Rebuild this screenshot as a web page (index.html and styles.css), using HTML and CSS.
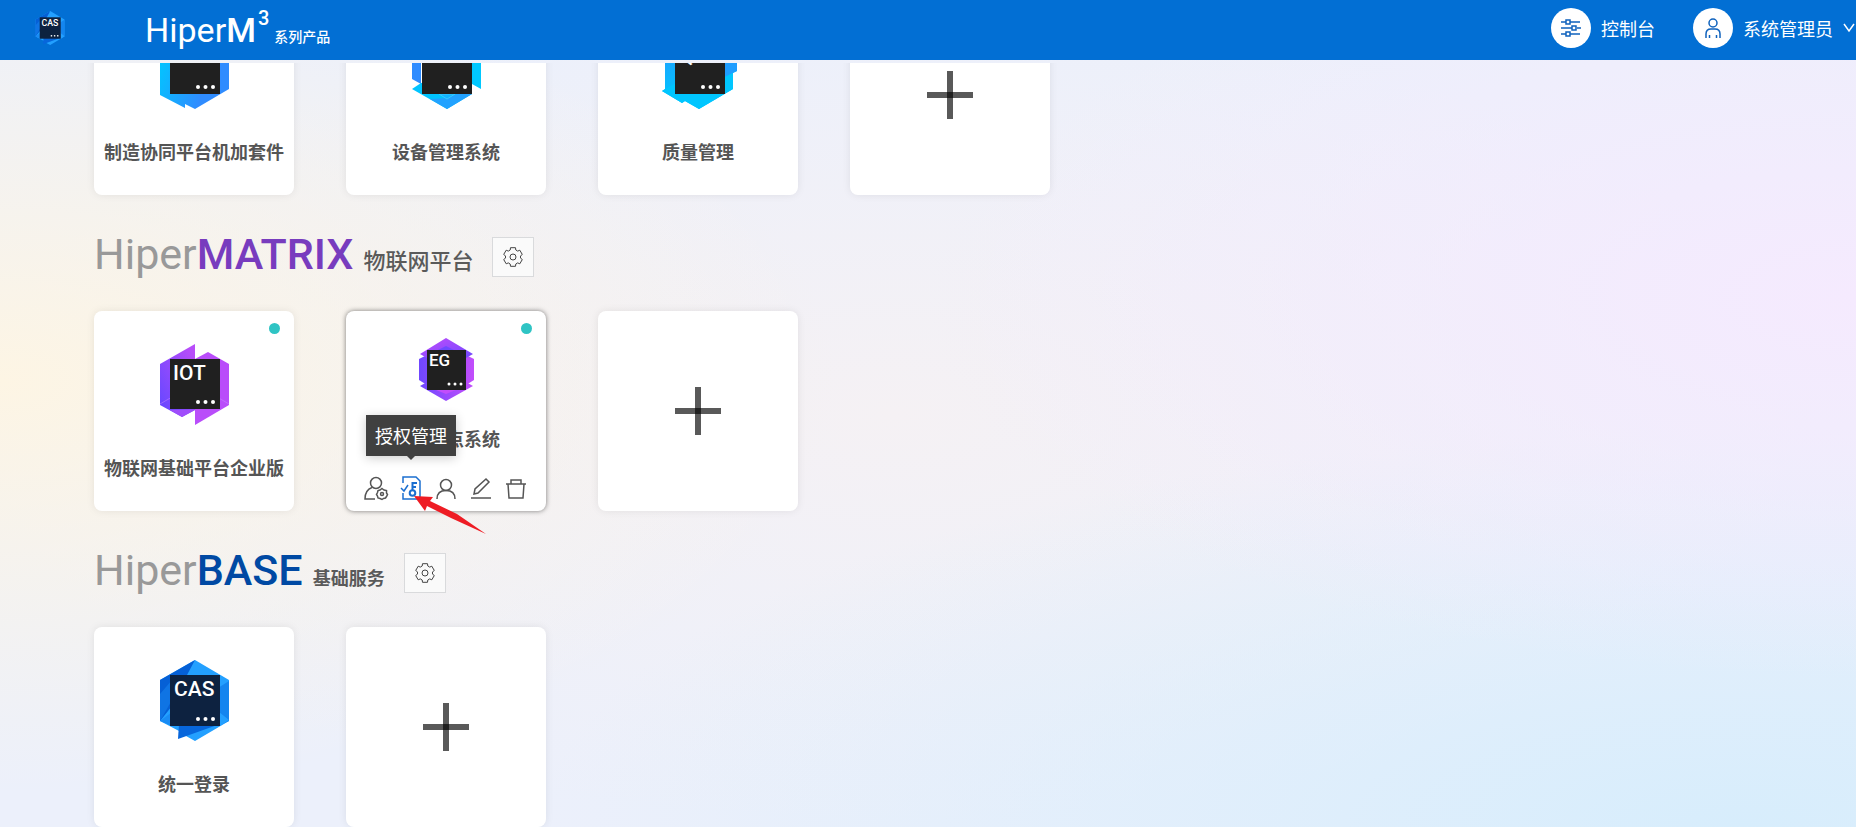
FILE: index.html
```html
<!DOCTYPE html>
<html lang="zh-CN">
<head>
    <meta charset="UTF-8">
    <meta name="viewport" content="width=device-width, initial-scale=1.0">
    <title>HiperM³ 系列产品</title>
    <link rel="stylesheet" href="styles.css">
</head>
<body>
    <svg class="defs" width="0" height="0" aria-hidden="true">
        <defs>
            <linearGradient id="cyanBlue" x1="0" y1="0.3" x2="1" y2="0.7">
                <stop offset="0" stop-color="#00c8ff"/>
                <stop offset="0.7" stop-color="#2f8cff"/>
            </linearGradient>
            <linearGradient id="blueCyan" x1="0" y1="0" x2="0.3" y2="1">
                <stop offset="0" stop-color="#2f8cff"/>
                <stop offset="0.8" stop-color="#00c4ff"/>
            </linearGradient>
            <linearGradient id="violet" x1="0" y1="0.8" x2="0.8" y2="0">
                <stop offset="0" stop-color="#6a48ff"/>
                <stop offset="1" stop-color="#b84dfa"/>
            </linearGradient>
            <linearGradient id="violetSide" x1="0" y1="0" x2="1" y2="0">
                <stop offset="0" stop-color="#6f48ff"/>
                <stop offset="1" stop-color="#c24dfb"/>
            </linearGradient>
            <linearGradient id="violetDown" x1="0" y1="0" x2="1" y2="1">
                <stop offset="0" stop-color="#c24dfb"/>
                <stop offset="1" stop-color="#6f48ff"/>
            </linearGradient>
        </defs>
        <symbol id="cas" viewBox="0 0 69 81">
            <path d="M35 0L69 20V61L35 81L26 76L19 71L0 61V20Z" fill="#23a0ff"/>
            <path d="M35 0L0 20V61L12 46L27 15Z" fill="#0560d6"/>
            <path d="M0 34V61L12 40V20Z" fill="#0f74e4"/>
            <path d="M0 61L12 52V66Z" fill="#1a8cf4"/>
            <path d="M69 21L58 28V66L69 61Z" fill="#1485ef"/>
            <path d="M59 52L69 60L60 66Z" fill="#23a0ff"/>
            <path d="M19 64L18 79L60 64Z" fill="#0766db"/>
            <path d="M10 15H60V66H10Z" fill="#0d2240"/>
            <text x="14" y="36" class="logo-text">CAS</text>
            <g fill="#fff"><circle cx="38" cy="59" r="2"/><circle cx="45.500" cy="59" r="2"/><circle cx="53" cy="59" r="2"/></g>
        </symbol>
        <symbol id="gear" viewBox="-11 -11 22 22">
            <path d="M-2.800 -7L-2.500 -9.300H2.500L2.800 -7L4.700 -5.900L6.800 -6.800L9.300 -2.500L7.500 -1.100V1.100L9.300 2.500L6.800 6.800L4.700 5.900L2.800 7L2.500 9.300H-2.500L-2.800 7L-4.700 5.900L-6.800 6.800L-9.300 2.500L-7.500 1.100V-1.100L-9.300 -2.500L-6.800 -6.800L-4.700 -5.900Z"/>
            <circle r="3"/>
        </symbol>
        <symbol id="plus" viewBox="0 0 46 48">
            <path d="M0 21H46V27H0Z"/>
            <path d="M20 0H26V48H20Z"/>
        </symbol>
    </svg>

    <header class="topbar">
        <svg class="brand-logo"><use href="#cas"/></svg>
        <h1 class="brand">Hiper<b>M</b><sup>3</sup><small>系列产品</small></h1>
        <nav class="topbar-nav">
            <a href="#" class="nav-item">
                <span class="nav-icon">
                    <svg width="20" height="20" viewBox="0 0 20 20">
                        <path d="M0 4H5M9 4H19M0 10H11M16 10H20M0 16H5M9 16H19M5 2H9V6H5ZM11 8H15V12H11ZM5 14H9V18H5Z"/>
                    </svg>
                </span>
                控制台
            </a>
            <button type="button" class="nav-item">
                <span class="nav-icon">
                    <svg width="18" height="20" viewBox="0 0 18 20">
                        <circle cx="9" cy="5" r="4"/>
                        <path d="M2 20V16Q2 11 7 11H11Q16 11 16 16V20M5.500 20V17M12.500 20V17"/>
                    </svg>
                </span>
                系统管理员
                <svg class="chevron" width="12" height="10" viewBox="0 0 12 10"><path d="M1 1L6 8L11 1"/></svg>
            </button>
        </nav>
    </header>

    <main>
        <section>
            <div class="cards">
                <a href="#" class="card">
                    <svg class="app-icon" viewBox="0 0 69 81">
                        <path d="M0 16L25 2V10L35 0L69 20V61L35 81L25 76V80L0 67Z" fill="url(#cyanBlue)"/>
                        <path d="M10 16H60V66H10Z" fill="#202020"/>
                        <text x="14" y="35" class="logo-text">MW</text>
                        <g fill="#fff"><circle cx="38" cy="59" r="2"/><circle cx="45.500" cy="59" r="2"/><circle cx="53" cy="59" r="2"/></g>
                    </svg>
                    <span class="card-name">制造协同平台机加套件</span>
                </a>
                <a href="#" class="card">
                    <svg class="app-icon" viewBox="0 0 69 81">
                        <path d="M35 0L0 20V51L9 56V20Z" fill="#2f8cff"/>
                        <path d="M35 0L69 20V61L60 56V20Z" fill="#00c8ff"/>
                        <path d="M9 55L0 61L35 81L60 66V50Z" fill="#00c4ff"/>
                        <path d="M60 60V66L35 81L18 71L35 70Z" fill="#22a2ff"/>
                        <path d="M27 66L35 71L43 66Z" fill="#12b4ff" stroke="#38c8ff"/>
                        <path d="M10 16H60V66H10Z" fill="#202020"/>
                        <text x="14" y="35" class="logo-text">EAM</text>
                        <g fill="#fff"><circle cx="38" cy="59" r="2"/><circle cx="45.500" cy="59" r="2"/><circle cx="53" cy="59" r="2"/></g>
                    </svg>
                    <span class="card-name">设备管理系统</span>
                </a>
                <a href="#" class="card">
                    <svg class="app-icon" viewBox="0 0 69 81">
                        <path d="M35 0L1 20V61L-2 63L18 75L21 73L35 81L69 61V45L73 43V22Z" fill="url(#blueCyan)"/>
                        <path d="M58 50L73 43V20L58 20Z" fill="#1f9dff"/>
                        <path d="M-2 63L10 56L60 50L69 45V61L35 81L21 73L18 75Z" fill="#00c6ff"/>
                        <path d="M11 16H61V66H11Z" fill="#202020"/>
                        <text x="15" y="35" class="logo-text">QMS</text>
                        <g fill="#fff"><circle cx="39" cy="59" r="2"/><circle cx="46.500" cy="59" r="2"/><circle cx="54" cy="59" r="2"/></g>
                    </svg>
                    <span class="card-name">质量管理</span>
                </a>
                <button type="button" class="card card-add" aria-label="添加应用"><svg class="plus"><use href="#plus"/></svg></button>
            </div>
        </section>

        <section>
            <div class="section-head">
                <h2 class="wordmark matrix">Hiper<b>MATRIX</b><small>物联网平台</small></h2>
                <button type="button" class="setting" aria-label="设置"><svg><use href="#gear"/></svg></button>
            </div>
            <div class="cards">
                <a href="#" class="card">
                    <i class="status"></i>
                    <svg class="app-icon" viewBox="0 0 69 81">
                        <path d="M0 20L35 0V66L22 73L0 61Z" fill="url(#violet)"/>
                        <path d="M35 15L48 8L69 20V61L35 81Z" fill="#b94dfa"/>
                        <path d="M10 66H35L22 73Z" fill="#a04dfb"/>
                        <path d="M0 60L12 53M69 60L57 53" stroke="#c98bff" stroke-width="0.500"/>
                        <path d="M10 15H60V65H10Z" fill="#202020"/>
                        <text x="13" y="36" class="logo-text">IOT</text>
                        <g fill="#fff"><circle cx="38" cy="58" r="2"/><circle cx="45.500" cy="58" r="2"/><circle cx="53" cy="58" r="2"/></g>
                    </svg>
                    <span class="card-name">物联网基础平台企业版</span>
                </a>
                <div class="card card-active">
                    <i class="status"></i>
                    <svg class="app-icon" viewBox="0 0 55 63">
                        <path d="M0 21L8 17H47L55 21V42L47 47H8L0 42Z" fill="url(#violetSide)"/>
                        <path d="M27 0L54 16L47 20H8L1 16Z" fill="url(#violetDown)"/>
                        <path d="M8 44H47L54 48L27 63L1 48Z" fill="url(#violetSide)"/>
                        <path d="M17 52H37L27 56Z" fill="#c24dfb"/>
                        <path d="M19 12L27 8L35 12Z" fill="#6f48ff"/>
                        <path d="M8 12H47V52H8Z" fill="#202020"/>
                        <text x="10" y="28" class="logo-text small">EG</text>
                        <g fill="#fff"><circle cx="30" cy="46" r="1.500"/><circle cx="36" cy="46" r="1.500"/><circle cx="42" cy="46" r="1.500"/></g>
                    </svg>
                    <span class="card-name">边缘节点系统</span>
                    <div class="tools">
                        <button type="button" class="tool" aria-label="用户配置">
                            <svg viewBox="0 0 24 24">
                                <circle cx="12" cy="7" r="5.500"/>
                                <path d="M8 11.500Q1 14 1 23H11"/>
                                <path d="M18 12.500L20 14L22.500 14.500V17L23.500 18.500L22.500 20.500L21.500 22L19.500 22.500L18 23.500L16 22.500L14 22L13.500 20L12.500 18.500L13.500 16.500L14 14.500L16 14Z"/>
                                <circle cx="18" cy="18" r="1.500"/>
                            </svg>
                        </button>
                        <button type="button" class="tool tool-on" aria-describedby="authTip">
                            <svg viewBox="0 0 24 24">
                                <path d="M4 7V1H17L21 5V23H4V17"/>
                                <path d="M2 12L5 15L9 9"/>
                                <circle cx="13.500" cy="17" r="2.800" stroke-width="2"/>
                                <path d="M13.500 14V7H18M13.500 11H17" stroke-width="2"/>
                            </svg>
                            <span class="tooltip" id="authTip" role="tooltip">授权管理</span>
                        </button>
                        <button type="button" class="tool" aria-label="用户">
                            <svg viewBox="0 0 24 24">
                                <circle cx="12" cy="9" r="5.500"/>
                                <path d="M3 23Q3 14.500 12 14.500Q21 14.500 21 23"/>
                            </svg>
                        </button>
                        <button type="button" class="tool" aria-label="编辑">
                            <svg viewBox="0 0 24 24">
                                <path d="M2 22H22M5 18L6 13L17 3L20 6L9 17Z"/>
                            </svg>
                        </button>
                        <button type="button" class="tool" aria-label="删除">
                            <svg viewBox="0 0 24 24">
                                <path d="M2 8H22M7 8V4H17V8M4 8L5 22H19L20 8"/>
                            </svg>
                        </button>
                    </div>
                    <svg class="pointer" width="74" height="42" viewBox="0 0 74 42">
                        <path d="M1 2L20 3L17 7L44 20L73 40L38 24L14 12L12 17Z"/>
                    </svg>
                </div>
                <button type="button" class="card card-add" aria-label="添加应用"><svg class="plus"><use href="#plus"/></svg></button>
            </div>
        </section>

        <section>
            <div class="section-head">
                <h2 class="wordmark base">Hiper<b>BASE</b><small>基础服务</small></h2>
                <button type="button" class="setting" aria-label="设置"><svg><use href="#gear"/></svg></button>
            </div>
            <div class="cards">
                <a href="#" class="card">
                    <svg class="app-icon"><use href="#cas"/></svg>
                    <span class="card-name">统一登录</span>
                </a>
                <button type="button" class="card card-add" aria-label="添加应用"><svg class="plus"><use href="#plus"/></svg></button>
            </div>
        </section>
    </main>
</body>
</html>
```

FILE: styles.css
```css
* {
    box-sizing: border-box;
}

body {
    margin: 0;
    height: 100vh;
    display: flex;
    flex-direction: column;
    overflow: hidden;
    font-family: "Noto Sans CJK SC", sans-serif;
    font-size: 18px;
    color: #555;
    background:
        radial-gradient(ellipse 45% 50% at 0% 46%, #fdf5e4, rgba(253, 245, 228, 0)),
        radial-gradient(ellipse 50% 46% at 100% 36%, #f5eafe, rgba(245, 234, 254, 0)),
        radial-gradient(ellipse 65% 48% at 94% 100%, #d7edfc, rgba(215, 237, 252, 0)),
        radial-gradient(ellipse 50% 50% at 48% 50%, #f5f1f4, rgba(245, 241, 244, 0)),
        #ecf0fb;
}

button {
    font: inherit;
    padding: 0;
    border: none;
    background: none;
    cursor: pointer;
}

a {
    color: inherit;
    text-decoration: none;
}

svg {
    display: block;
    overflow: visible;
}

.defs {
    position: absolute;
}

.topbar {
    display: flex;
    align-items: center;
    flex: none;
    height: 60px;
    padding: 0 1px 4px 35px;
    background-color: #026fd4;
    color: #fff;
}

.brand-logo {
    width: 30px;
    height: 34px;
}

.brand {
    display: flex;
    align-items: baseline;
    margin: 4px 0 0 80px;
    font-family: Roboto, sans-serif;
    font-size: 34px;
    line-height: 40px;
    font-weight: normal;
    white-space: nowrap;
}

.brand b {
    font-weight: 500;
}

.brand sup {
    align-self: flex-start;
    margin: 0 5px 0 2px;
    font-size: 20px;
    line-height: 16px;
    font-weight: 500;
}

.brand small {
    font-family: "Noto Sans CJK SC", sans-serif;
    font-size: 14px;
    line-height: 20px;
    font-weight: 500;
}

.topbar-nav {
    display: flex;
    gap: 38px;
    margin-left: auto;
}

.nav-item {
    display: flex;
    align-items: center;
    gap: 10px;
    color: #fff;
    white-space: nowrap;
}

.nav-icon {
    display: flex;
    align-items: center;
    justify-content: center;
    width: 40px;
    height: 40px;
    border-radius: 50%;
    background-color: #fff;
}

.nav-icon svg,
.chevron {
    fill: none;
    stroke: #0f62bd;
    stroke-width: 1.5;
}

.chevron {
    stroke: #fff;
}

/* the list is scrolled to its end */
main {
    flex: 1;
    min-height: 0;
    margin-top: 3px;
    padding-left: 94px;
    display: flex;
    flex-direction: column;
    justify-content: flex-end;
    overflow: hidden;
}

section {
    flex: none;
}

.section-head {
    display: flex;
    align-items: flex-start;
    gap: 19px;
    height: 116px;
    padding-top: 42px;
}

.wordmark {
    display: flex;
    align-items: baseline;
    margin: 0;
    font-family: Roboto, sans-serif;
    font-size: 43px;
    line-height: 34px;
    font-weight: normal;
    color: #999;
    white-space: nowrap;
}

.wordmark b {
    font-weight: 500;
}

.wordmark small {
    margin-left: 10px;
    font-family: "Noto Sans CJK SC", sans-serif;
    font-size: 18px;
    line-height: 24px;
    font-weight: bold;
    color: #5a5a5a;
}

.matrix b {
    color: #783cbe;
}

.matrix small {
    font-size: 22px;
    font-weight: 500;
}

.base b {
    color: #0049a3;
}

.setting {
    display: flex;
    align-items: center;
    justify-content: center;
    width: 42px;
    height: 40px;
    border: 1px solid #d9dadc;
    background-color: #fafafa;
}

.setting svg {
    width: 22px;
    height: 22px;
    fill: none;
    stroke: #444;
    stroke-linejoin: round;
}

.cards {
    display: flex;
    gap: 52px;
}

.card {
    position: relative;
    display: flex;
    flex-direction: column;
    align-items: center;
    flex: none;
    width: 200px;
    height: 200px;
    padding-top: 33px;
    border-radius: 8px;
    background-color: #fff;
    box-shadow: 0 0 8px rgba(0, 0, 0, 0.08);
}

.card-add {
    justify-content: center;
    padding-top: 0;
}

.plus {
    width: 46px;
    height: 48px;
    fill: rgba(0, 0, 0, 0.65);
}

.app-icon {
    width: 69px;
    height: 81px;
}

.logo-text {
    font-family: Roboto, sans-serif;
    font-size: 21px;
    font-weight: 500;
    fill: #fff;
}

.logo-text.small {
    font-size: 17px;
}

.card-name {
    margin-top: 28px;
    line-height: 28px;
    font-weight: bold;
    white-space: nowrap;
}

.status {
    position: absolute;
    top: 12px;
    right: 14px;
    width: 11px;
    height: 11px;
    border-radius: 50%;
    background-color: #2fc4c4;
}

.card-active {
    padding-top: 27px;
    box-shadow: 0 0 5px rgba(0, 0, 0, 0.5);
}

.card-active .app-icon {
    width: 55px;
    height: 63px;
}

.card-active .card-name {
    margin-top: 23px;
}

.tools {
    display: flex;
    margin-top: 24px;
}

.tool {
    position: relative;
    display: flex;
    justify-content: center;
    width: 35px;
    height: 24px;
}

.tool svg {
    width: 24px;
    height: 24px;
    fill: none;
    stroke: #555;
    stroke-width: 1.5;
}

.tool-on svg {
    stroke: #1b6fd0;
}

.tooltip {
    position: absolute;
    bottom: 44px;
    left: 50%;
    transform: translateX(-50%);
    padding: 0 9px;
    line-height: 41px;
    color: #fff;
    background-color: #404040;
    white-space: nowrap;
    box-shadow: 0 2px 10px rgba(0, 0, 0, 0.2);
}

.tooltip::after {
    content: "";
    position: absolute;
    top: 100%;
    left: 50%;
    margin-left: -4px;
    border: 4px solid transparent;
    border-top-color: #404040;
}

.pointer {
    position: absolute;
    top: 183px;
    left: 67px;
    fill: #ee1c24;
}
```
